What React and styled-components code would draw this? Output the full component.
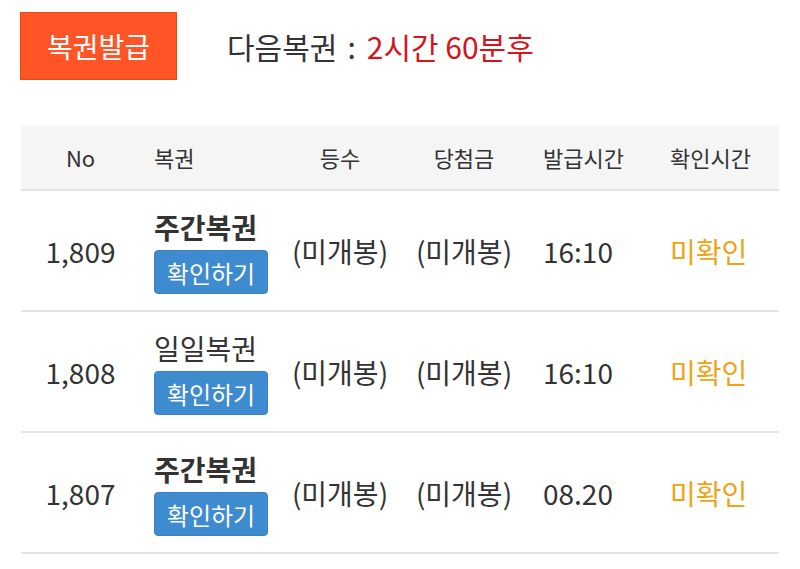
import React from "react";
import styled, { createGlobalStyle } from "styled-components";

const GlobalStyle = createGlobalStyle`
  body {
    margin: 0;
    background: #ffffff;
    font-family: "Noto Sans CJK KR", "Noto Sans", sans-serif;
    color: #333333;
  }
`;

const Page = styled.div`
  padding: 12px 21px 0 20px;
`;

const TopBar = styled.div`
  display: flex;
  align-items: center;
`;

const IssueButton = styled.button`
  width: 157px;
  height: 68px;
  background-color: #ff5526;
  border: 1px solid #e8481c;
  color: #ffffff;
  font-family: inherit;
  font-size: 28px;
  padding: 0;
  cursor: pointer;
`;

const NextInfo = styled.div`
  margin-left: 50px;
  font-size: 30px;
  color: #333333;
`;

const Colon = styled.span`
  margin: 0 11px 0 10px;
`;

const Remain = styled.span`
  color: #d4161c;
`;

const Table = styled.div`
  margin-top: 45px;
  margin-left: 1px;
  width: 758px;
`;

const Cols = "119px 140px 120px 128px 127px 124px";

const HeadRow = styled.div`
  display: grid;
  grid-template-columns: ${Cols};
  height: 64px;
  background-color: #f5f5f5;
  border-bottom: 2px solid #e4e4e4;
`;

const Row = styled.div`
  display: grid;
  grid-template-columns: ${Cols};
  height: 119px;
  border-bottom: 2px solid #e4e4e4;
`;

const Cell = styled.div`
  display: flex;
  align-items: center;
  justify-content: ${(p) => (p.$left ? "flex-start" : "center")};
  padding-left: ${(p) => (p.$left ? "15px" : "0")};
  font-size: ${(p) => (p.$head ? "22px" : "28px")};
  color: ${(p) => p.$color || "#333333"};
`;

const LottoCell = styled(Cell)`
  flex-direction: column;
  align-items: flex-start;
  justify-content: center;
  padding-left: 14px;
  padding-top: 4px;
  gap: 7px;
`;

const LottoName = styled.div`
  font-size: 28px;
  line-height: 32px;
  font-weight: ${(p) => (p.$bold ? 700 : 400)};
`;

const CheckButton = styled.button`
  width: 114px;
  height: 44px;
  background-color: #3f8bd0;
  border: 1px solid #3a80c2;
  border-radius: 4px;
  color: #ffffff;
  font-family: inherit;
  font-size: 24px;
  padding: 0;
  cursor: pointer;
`;

const rows = [
  { no: "1,809", name: "주간복권", bold: true, time: "16:10" },
  { no: "1,808", name: "일일복권", bold: false, time: "16:10" },
  { no: "1,807", name: "주간복권", bold: true, time: "08.20" },
];

export default function App() {
  return (
    <>
      <GlobalStyle />
      <Page>
        <TopBar>
          <IssueButton>복권발급</IssueButton>
          <NextInfo>
            다음복권<Colon>:</Colon>
            <Remain>2시간 60분후</Remain>
          </NextInfo>
        </TopBar>

        <Table>
          <HeadRow>
            <Cell $head>No</Cell>
            <Cell $head $left style={{ paddingLeft: 14 }}>복권</Cell>
            <Cell $head>등수</Cell>
            <Cell $head>당첨금</Cell>
            <Cell $head $left>발급시간</Cell>
            <Cell $head $left>확인시간</Cell>
          </HeadRow>
          {rows.map((r) => (
            <Row key={r.no}>
              <Cell>{r.no}</Cell>
              <LottoCell>
                <LottoName $bold={r.bold}>{r.name}</LottoName>
                <CheckButton>확인하기</CheckButton>
              </LottoCell>
              <Cell>(미개봉)</Cell>
              <Cell>(미개봉)</Cell>
              <Cell $left>{r.time}</Cell>
              <Cell $left $color="#eea416">미확인</Cell>
            </Row>
          ))}
        </Table>
      </Page>
    </>
  );
}
